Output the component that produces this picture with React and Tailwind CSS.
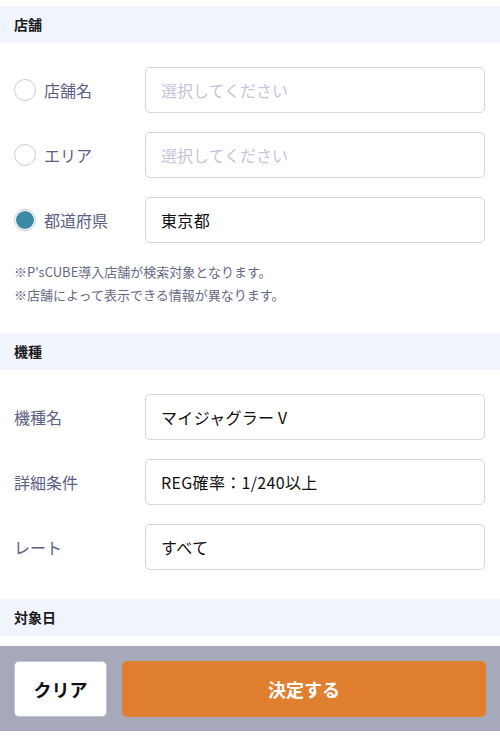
import { useState } from 'react';

const font = { fontFamily: '"Noto Sans CJK JP", "Noto Sans", sans-serif' };

function SectionHeader({ title }) {
  return (
    <div className="h-[37px] bg-[#f0f4fd] px-[14px] flex items-center text-[14px] font-bold text-[#1a1a1a]">
      {title}
    </div>
  );
}

function Field({ value, placeholder }) {
  return (
    <div className="w-[340px] h-[46px] border border-[#d4d6dd] rounded-[5px] bg-white flex items-center px-[15px] text-[16px]">
      {value ? (
        <span className="text-[#111111] tracking-[0.02em]">{value}</span>
      ) : (
        <span className="text-[#c3c6da]">{placeholder}</span>
      )}
    </div>
  );
}

function Radio({ checked }) {
  return (
    <span className="w-[22px] h-[22px] rounded-full border border-[#c9ccd8] bg-white flex items-center justify-center">
      {checked && <span className="w-[18px] h-[18px] rounded-full bg-[#3b8ba5]"></span>}
    </span>
  );
}

export default function App() {
  const [area, setArea] = useState('pref');
  const storeRows = [
    { key: 'store', label: '店舗名', placeholder: '選択してください' },
    { key: 'area', label: 'エリア', placeholder: '選択してください' },
    { key: 'pref', label: '都道府県', value: '東京都' },
  ];
  const modelRows = [
    { label: '機種名', value: 'マイジャグラーⅤ' },
    { label: '詳細条件', value: 'REG確率：1/240以上' },
    { label: 'レート', value: 'すべて' },
  ];

  return (
    <div className="w-[500px] h-[750px] bg-white overflow-hidden pt-[6px]" style={font}>
      {/* 店舗 */}
      <SectionHeader title="店舗" />
      <div className="flex flex-col gap-[19px] pt-[24px] pr-[15px]">
        {storeRows.map((r) => (
          <div key={r.key} className="flex items-center h-[46px]">
            <button
              className="w-[145px] flex items-center gap-[8px] pl-[14px] text-[16px] text-[#5b6084]"
              onClick={() => setArea(r.key)}
            >
              <Radio checked={area === r.key} />
              {r.label}
            </button>
            <Field value={r.value} placeholder={r.placeholder} />
          </div>
        ))}
      </div>
      <div className="px-[14px] pt-[17px] text-[13px] leading-[23px] text-[#656a86]">
        <p>※P'sCUBE導入店舗が検索対象となります。</p>
        <p>※店舗によって表示できる情報が異なります。</p>
      </div>

      {/* 機種 */}
      <div className="mt-[27px]">
        <SectionHeader title="機種" />
      </div>
      <div className="flex flex-col gap-[19px] pt-[24px] pr-[15px]">
        {modelRows.map((r) => (
          <div key={r.label} className="flex items-center h-[46px]">
            <div className="w-[145px] pl-[14px] text-[16px] text-[#5b6084]">{r.label}</div>
            <Field value={r.value} />
          </div>
        ))}
      </div>

      {/* 対象日 */}
      <div className="mt-[29px]">
        <SectionHeader title="対象日" />
      </div>

      {/* Footer */}
      <div className="mt-[10px] h-[85px] bg-[#a5a9ba] flex items-center gap-[15px] px-[14px] pt-[1px]">
        <button className="w-[93px] h-[56px] bg-white rounded-[5px] border border-[#c3c6d2] text-[18px] font-bold text-[#111111]">
          クリア
        </button>
        <button className="flex-1 h-[56px] bg-[#e07f2f] rounded-[5px] text-[18px] font-bold text-white">
          決定する
        </button>
      </div>
    </div>
  );
}
